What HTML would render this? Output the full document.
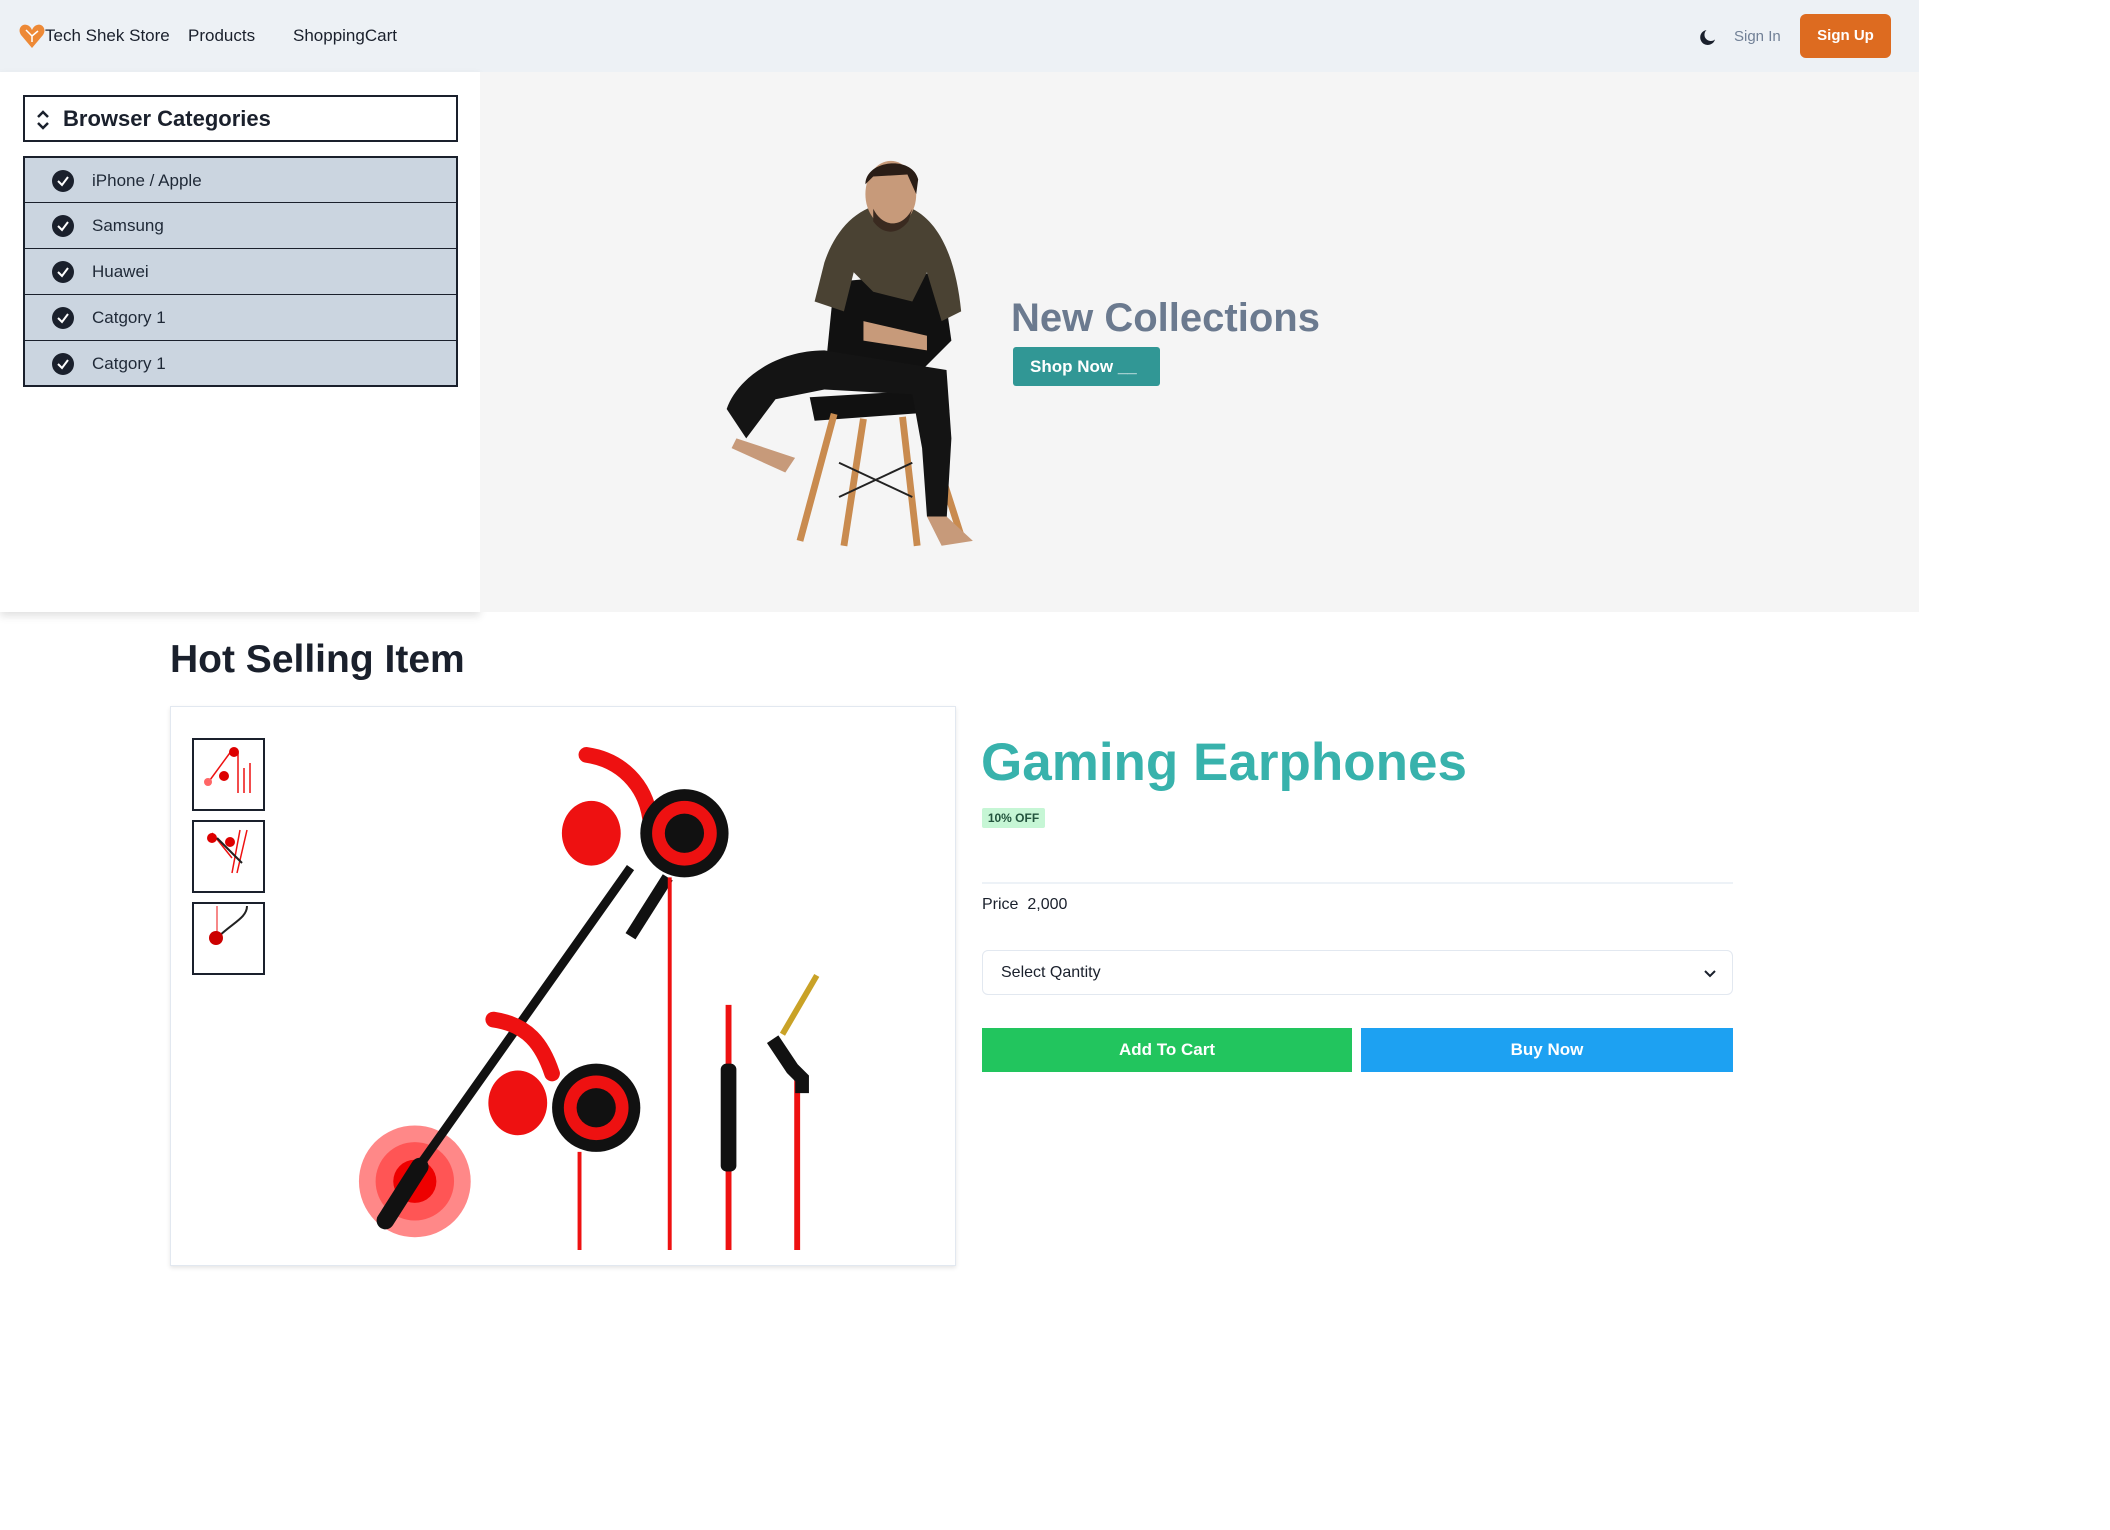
<!DOCTYPE html>
<html><head><meta charset="utf-8"><style>
*{box-sizing:border-box;margin:0;padding:0}
body{width:2110px;height:1530px;background:#fff;font-family:"Liberation Sans",sans-serif;color:#1a202c;position:relative;overflow:hidden}
.abs{position:absolute}
.nav{left:0;top:0;width:1919px;height:72px;background:#edf1f5}
.nav span{position:absolute;top:26px;font-size:17px;color:#1a202c}
.side{left:0;top:72px;width:480px;height:540px;background:#fff;box-shadow:0 4px 8px rgba(0,0,0,.12)}
.hero{left:480px;top:72px;width:1439px;height:540px;background:#f5f5f5}
.cathead{left:23px;top:95px;width:435px;height:47px;border:2px solid #1a202c;background:#fff}
.row{position:absolute;left:23px;width:435px;height:47px;background:#cbd5e0;border:2px solid #1a202c;border-top-width:1px;border-bottom-width:1px;font-size:17px;color:#1f2937}
.row .ck{position:absolute;left:27px;top:12px;width:22px;height:22px;border-radius:50%;background:#1a202c}
.row .t{position:absolute;left:67px;top:13px}
.row svg{position:absolute;left:32px;top:17px}
</style></head><body>
<div class="abs nav">
 <svg class="abs" style="left:18px;top:22px" width="28" height="28" viewBox="0 0 28 28"><path d="M14 26 L3 13 C-1 7 4 1 9 3 C12 4 13 6 14 8 C15 6 16 4 19 3 C24 1 29 7 25 13 Z" fill="#ed8936"/><path d="M8 8 L14 14 M14 14 L20 9 M14 14 V20" stroke="#fff" stroke-width="1.5"/></svg>
 <span style="left:45px">Tech Shek Store</span>
 <span style="left:188px">Products</span>
 <span style="left:293px">ShoppingCart</span>
 <svg class="abs" style="left:1699px;top:29px" width="17" height="17" viewBox="0 0 18 18"><path d="M8 1 A8 8 0 1 0 17 11 A6.5 6.5 0 0 1 8 1Z" fill="#1a202c"/></svg>
 <span style="left:1734px;top:28px;font-size:15px;color:#718096">Sign In</span>
 <div class="abs" style="left:1800px;top:14px;width:91px;height:44px;background:#dd6b20;border-radius:6px;color:#fff;font-weight:bold;font-size:15px;text-align:center;line-height:44px">Sign Up</div>
</div>
<div class="abs side"></div>
<div class="abs hero">
 <svg class="abs" style="left:233px;top:83px" width="340" height="425" viewBox="0 0 340 435">
  <path d="M120 130 L230 120 L240 190 L200 230 L110 230 Z" fill="#111"/>
  <path d="M95 248 L230 240 L238 262 L100 272Z" fill="#111"/>
  <path d="M120 265 L85 395 M210 265 L250 390 M150 270 L130 400 M190 268 L205 400" stroke="#c98b4f" stroke-width="7"/>
  <path d="M125 315 L200 350 M200 315 L125 350" stroke="#222" stroke-width="2"/>
  <path d="M170 50 C140 55 120 80 110 110 L100 150 L130 160 L140 120 L160 140 L200 150 L215 120 L230 170 L250 160 C245 110 230 70 200 55Z" fill="#4a4233"/>
  <ellipse cx="178" cy="40" rx="26" ry="34" fill="#c79a7a"/>
  <path d="M152 30 C152 5 200 0 206 25 L204 40 L195 20 L160 22Z" fill="#2a1d16"/>
  <path d="M160 55 C170 75 190 75 200 55 L196 68 C185 82 170 82 160 68Z" fill="#3a2a20"/>
  <path d="M110 200 C60 200 20 230 10 260 L30 290 L60 250 L110 240 L200 245 L210 300 L215 370 L235 375 L240 290 L235 220 Z" fill="#141414"/>
  <path d="M20 290 L80 310 L70 325 L15 300Z" fill="#c79a7a"/>
  <path d="M215 370 L235 370 L262 395 L230 400Z" fill="#c79a7a"/>
  <path d="M150 170 L215 185 L215 200 L150 190Z" fill="#c79a7a"/>
 </svg>
 <div class="abs" style="left:531px;top:224px;font-size:40px;font-weight:bold;color:#6b7a8f">New Collections</div>
 <div class="abs" style="left:533px;top:275px;width:147px;height:39px;background:#319795;border-radius:3px;color:#fff;font-weight:bold;font-size:17px;line-height:39px;padding-left:17px">Shop Now __</div>
</div>
<div class="abs cathead">
 <svg class="abs" style="left:10px;top:11px" width="16" height="24" viewBox="0 0 16 24"><path d="M3 9 L8 4 L13 9 M3 15 L8 20 L13 15" stroke="#1a202c" stroke-width="2.5" fill="none"/></svg>
 <div class="abs" style="left:38px;top:9px;font-size:22px;font-weight:bold">Browser Categories</div>
</div>
<div class="row" style="top:156px;border-top-width:2px"><div class="ck"></div><svg width="12" height="12"><path d="M1 6 L5 10 L11 2" stroke="#fff" stroke-width="2" fill="none"/></svg><div class="t">iPhone / Apple</div></div>
<div class="row" style="top:202px"><div class="ck"></div><svg width="12" height="12"><path d="M1 6 L5 10 L11 2" stroke="#fff" stroke-width="2" fill="none"/></svg><div class="t">Samsung</div></div>
<div class="row" style="top:248px"><div class="ck"></div><svg width="12" height="12"><path d="M1 6 L5 10 L11 2" stroke="#fff" stroke-width="2" fill="none"/></svg><div class="t">Huawei</div></div>
<div class="row" style="top:294px"><div class="ck"></div><svg width="12" height="12"><path d="M1 6 L5 10 L11 2" stroke="#fff" stroke-width="2" fill="none"/></svg><div class="t">Catgory 1</div></div>
<div class="row" style="top:340px;border-bottom-width:2px"><div class="ck"></div><svg width="12" height="12"><path d="M1 6 L5 10 L11 2" stroke="#fff" stroke-width="2" fill="none"/></svg><div class="t">Catgory 1</div></div>

<div class="abs" style="left:170px;top:638px;font-size:39px;font-weight:bold">Hot Selling Item</div>
<div class="abs" style="left:170px;top:706px;width:786px;height:560px;border:1px solid #e2e8f0;box-shadow:0 2px 4px rgba(0,0,0,.1)"></div>
<div class="abs" style="left:192px;top:738px;width:73px;height:73px;border:2px solid #1a202c"></div>
<div class="abs" style="left:192px;top:820px;width:73px;height:73px;border:2px solid #1a202c"></div>
<div class="abs" style="left:192px;top:902px;width:73px;height:73px;border:2px solid #1a202c"></div>
<svg class="abs" style="left:192px;top:738px" width="73" height="240" viewBox="0 0 73 240">
 <path d="M40 12 L18 42 M46 15 V55 M52 30 V55 M58 25 V55" stroke="#e11" stroke-width="1.5"/><circle cx="42" cy="14" r="5" fill="#d00"/><circle cx="32" cy="38" r="5" fill="#d00"/><circle cx="16" cy="44" r="4" fill="#f66"/>
 <path d="M20 95 L40 120 M48 92 L40 135 M55 92 L45 135" stroke="#e11" stroke-width="1.5"/><circle cx="20" cy="100" r="5" fill="#d00"/><circle cx="38" cy="104" r="5" fill="#d00"/><path d="M25 100 L50 125" stroke="#222" stroke-width="2"/>
 <path d="M25 200 C40 185 55 180 55 168" stroke="#222" stroke-width="2" fill="none"/><path d="M25 168 V195" stroke="#e11"/><circle cx="24" cy="200" r="7" fill="#c00"/>
</svg>
<svg class="abs" style="left:356px;top:740px" width="500" height="515" viewBox="0 0 510 525">
 <circle cx="60" cy="450" r="57" fill="#f88"/><circle cx="60" cy="450" r="40" fill="#f55"/><circle cx="60" cy="450" r="22" fill="#e00"/>
 <path d="M25 490 L280 130" stroke="#111" stroke-width="9"/><path d="M30 490 L65 435" stroke="#111" stroke-width="18" stroke-linecap="round"/>
 <path d="M235 15 C270 20 295 45 300 80" stroke="#e11" stroke-width="16" fill="none" stroke-linecap="round"/>
 <ellipse cx="240" cy="95" rx="30" ry="33" fill="#e11"/>
 <circle cx="335" cy="95" r="45" fill="#111"/><circle cx="335" cy="95" r="33" fill="#e11"/><circle cx="335" cy="95" r="20" fill="#111"/>
 <path d="M318 140 L280 200" stroke="#111" stroke-width="12"/>
 <path d="M320 140 V520" stroke="#e11" stroke-width="4"/>
 <path d="M140 285 C175 290 190 310 200 340" stroke="#e11" stroke-width="16" fill="none" stroke-linecap="round"/>
 <ellipse cx="165" cy="370" rx="30" ry="33" fill="#e11"/>
 <circle cx="245" cy="375" r="45" fill="#111"/><circle cx="245" cy="375" r="33" fill="#e11"/><circle cx="245" cy="375" r="20" fill="#111"/>
 <path d="M228 420 V520" stroke="#e11" stroke-width="4"/>
 <path d="M380 270 V520" stroke="#e11" stroke-width="6"/><rect x="372" y="330" width="16" height="110" rx="6" fill="#111"/>
 <path d="M450 345 V520" stroke="#e11" stroke-width="6"/><path d="M425 305 L445 335 L455 345 V360" stroke="#111" stroke-width="14" fill="none"/><path d="M435 300 L470 240" stroke="#c9a227" stroke-width="6"/>
</svg>

<div class="abs" style="left:981px;top:732px;font-size:53px;font-weight:bold;color:#38b2ac">Gaming Earphones</div>
<div class="abs" style="left:982px;top:808px;width:63px;height:20px;background:#c6f6d5;color:#22543d;font-size:12px;font-weight:bold;line-height:20px;text-align:center;border-radius:2px">10% OFF</div>
<div class="abs" style="left:982px;top:882px;width:751px;height:2px;background:#edf2f7"></div>
<div class="abs" style="left:982px;top:896px;font-size:16px">Price&nbsp; 2,000</div>
<div class="abs" style="left:982px;top:950px;width:751px;height:45px;border:1px solid #e2e8f0;border-radius:6px;font-size:16px;padding:13px 0 0 18px">Select Qantity
 <svg class="abs" style="right:16px;top:18px" width="12" height="10"><path d="M1 2 L6 7 L11 2" stroke="#1a202c" stroke-width="2" fill="none"/></svg></div>
<div class="abs" style="left:982px;top:1028px;width:370px;height:44px;background:#22c55e;color:#fff;font-size:17px;font-weight:bold;text-align:center;line-height:44px">Add To Cart</div>
<div class="abs" style="left:1361px;top:1028px;width:372px;height:44px;background:#1da1f2;color:#fff;font-size:17px;font-weight:bold;text-align:center;line-height:44px">Buy Now</div>
</body></html>
